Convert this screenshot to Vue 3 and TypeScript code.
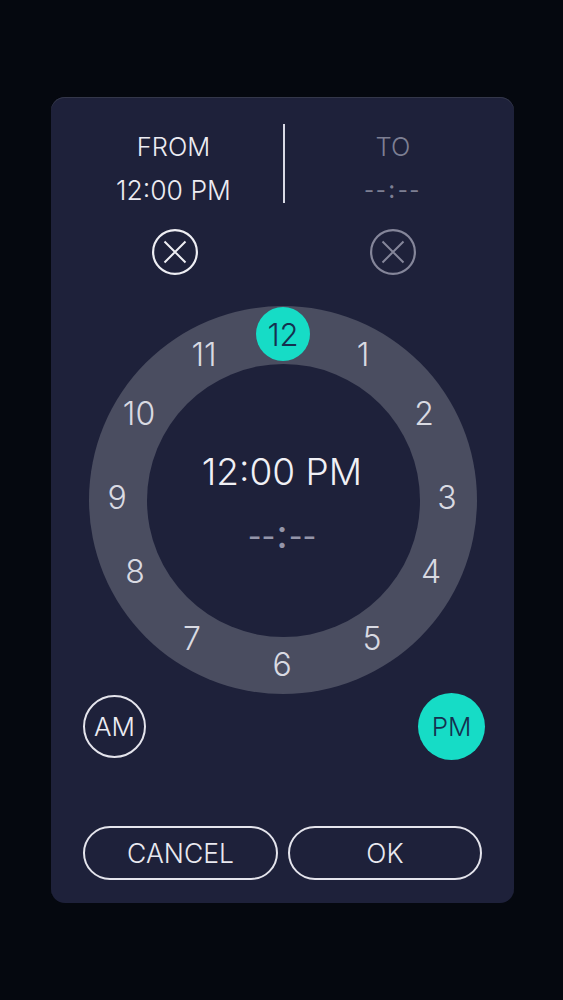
<script setup lang="ts">
interface Hour { label: string; x: number; y: number }

const hours: Hour[] = [
  { label: '1', x: 363, y: 355 },
  { label: '2', x: 424, y: 414 },
  { label: '3', x: 447, y: 498 },
  { label: '4', x: 431, y: 572 },
  { label: '5', x: 372, y: 639 },
  { label: '6', x: 282, y: 665 },
  { label: '7', x: 192, y: 639 },
  { label: '8', x: 135, y: 572 },
  { label: '9', x: 117, y: 498 },
  { label: '10', x: 139, y: 414 },
  { label: '11', x: 204, y: 355 },
]

// The ring box starts at x 89, y 306 in page coordinates
const pos = (h: Hour) => ({ left: `${h.x - 89}px`, top: `${h.y - 306}px` })
</script>

<template>
  <main class="screen">
    <section class="card">
      <header class="range">
        <div class="col">
          <div class="label">FROM</div>
          <div class="value">12:00 PM</div>
        </div>
        <div class="divider"></div>
        <div class="col dim">
          <div class="label">TO</div>
          <div class="value blank">--<span class="colon">:</span>--</div>
        </div>
      </header>

      <div class="clears">
        <svg class="clear" viewBox="0 0 46 46" fill="none" stroke="#eeeef3" stroke-width="2.2">
          <circle cx="23" cy="23" r="21.9" />
          <path d="M12.5 12.5 33.5 33.5M33.5 12.5 12.5 33.5" stroke-width="2" />
        </svg>
        <span></span>
        <svg class="clear" viewBox="0 0 46 46" fill="none" stroke="#85869a" stroke-width="2.2">
          <circle cx="23" cy="23" r="21.9" />
          <path d="M12.5 12.5 33.5 33.5M33.5 12.5 12.5 33.5" stroke-width="2" />
        </svg>
      </div>

      <div class="ring">
        <div class="hole">
          <div class="now">12:00 PM</div>
          <div class="dashes">--<span class="colon-big">:</span>--</div>
        </div>
        <div class="selected">12</div>
        <span v-for="h in hours" :key="h.label" class="hour" :style="pos(h)">{{ h.label }}</span>
      </div>

      <div class="period">
        <button class="am" type="button">AM</button>
        <button class="pm" type="button">PM</button>
      </div>

      <div class="actions">
        <button class="action" type="button">CANCEL</button>
        <button class="action" type="button">OK</button>
      </div>
    </section>
  </main>
</template>

<style>
html, body { margin: 0; background: #05080f; }
</style>

<style scoped>
.screen {
  width: 563px;
  height: 1000px;
  box-sizing: border-box;
  padding: 97px 49px 0 51px;
  background: #05080f;
  font-family: Inter, "Liberation Sans", sans-serif;
  font-weight: 300;
  overflow: hidden;
}
.card {
  width: 463px;
  height: 806px;
  box-sizing: border-box;
  padding: 27px 13px 0;
  border-radius: 14px;
  background: #1e213a;
  box-shadow: inset 0 1px 0 #34374a;
  display: flex;
  flex-direction: column;
}
.range {
  display: grid;
  grid-template-columns: 219px 2px 1fr;
  grid-template-rows: 79px;
}
.col {
  display: flex;
  flex-direction: column;
  align-items: center;
  color: #ececf2;
}
.col.dim { color: #7d7f93; }
.label {
  font-size: 25.5px;
  line-height: 30px;
  margin-top: 8px;
}
.value {
  font-size: 26.5px;
  line-height: 30px;
  margin-top: 13px;
}
.blank {
  display: flex;
  align-items: center;
  height: 30px;
  letter-spacing: 1.5px;
  font-size: 22px;
  font-weight: 400;
  margin-left: -1px;
}
.colon {
  font-size: 24px;
  line-height: 0;
  margin: 0 1px;
}
.divider { background: #d8d9e4; }
.clears {
  display: grid;
  grid-template-columns: 219px 2px 1fr;
  justify-items: center;
  margin-top: 26px;
}
.clear { width: 46px; height: 46px; display: block; }
.clear:first-child { margin-left: 3px; }
.ring {
  position: relative;
  width: 388px;
  height: 388px;
  box-sizing: border-box;
  margin: 31px 0 0 25px;
  border-radius: 50%;
  background: #4a4d60;
  display: flex;
  align-items: center;
  justify-content: center;
}
.hole {
  width: 273px;
  height: 273px;
  border-radius: 50%;
  background: #1e213a;
  display: flex;
  flex-direction: column;
  align-items: center;
  box-sizing: border-box;
  padding-top: 86px;
}
.now {
  font-size: 37px;
  line-height: 44px;
  color: #f0f0f5;
  margin-left: -2px;
}
.dashes {
  display: flex;
  align-items: center;
  height: 36px;
  font-size: 30px;
  line-height: 36px;
  font-weight: 400;
  margin-top: 24px;
  margin-left: -2px;
  color: #9495a9;
}
.colon-big {
  font-size: 40px;
  line-height: 0;
  margin: 0 1px;
  position: relative;
  top: -2px;
}
.selected {
  position: absolute;
  left: 167px;
  top: 1px;
  width: 54px;
  height: 54px;
  border-radius: 50%;
  background: #16dcc6;
  color: #15304f;
  font-size: 31px;
  line-height: 56px;
  text-align: center;
}
.hour {
  position: absolute;
  transform: translate(-50%, -50%);
  font-size: 32px;
  line-height: 36px;
  color: #d9dae2;
}
.period {
  display: flex;
  justify-content: space-between;
  align-items: center;
  margin: -1px 16px 0 19px;
  height: 66px;
}
button {
  font-family: inherit;
  font-weight: 300;
  padding: 0;
  cursor: pointer;
}
.am {
  width: 63px;
  height: 63px;
  border: 2px solid #e4e4ec;
  border-radius: 50%;
  background: transparent;
  color: #ececf2;
  font-size: 26px;
}
.pm {
  width: 67px;
  height: 67px;
  border: 0;
  border-radius: 50%;
  background: #16dcc6;
  color: #15304f;
  font-size: 26px;
}
.actions {
  display: grid;
  grid-template-columns: 195px 194px;
  gap: 10px;
  margin: 67px 0 0 19px;
}
.action {
  height: 54px;
  border: 2px solid #e4e4ec;
  border-radius: 27px;
  background: transparent;
  color: #e9e9f0;
  font-size: 26.5px;
}
</style>
